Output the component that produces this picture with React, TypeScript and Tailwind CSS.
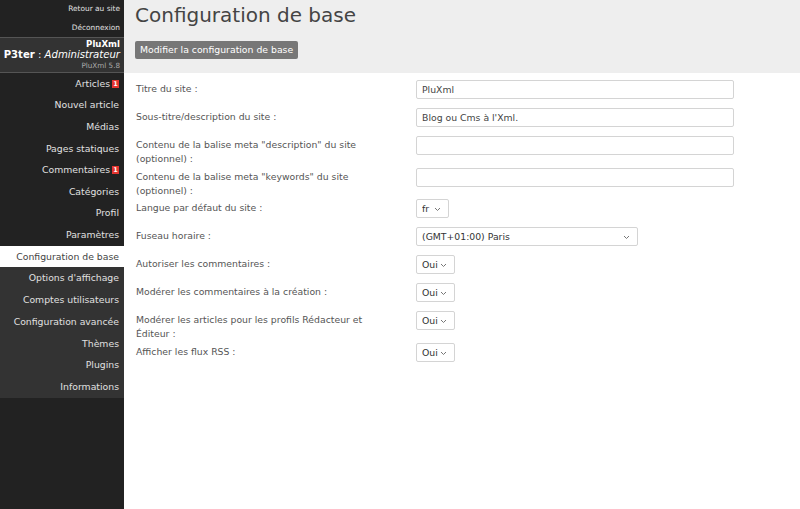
import { ReactNode } from "react";

/* ── sidebar menu ─────────────────────────────── */
const menuTop = [
    { label: "Articles", badge: true },
    { label: "Nouvel article" },
    { label: "Médias" },
    { label: "Pages statiques" },
    { label: "Commentaires", badge: true },
    { label: "Catégories" },
    { label: "Profil" },
    { label: "Paramètres" },
];

const menuBottom = [
    "Options d'affichage",
    "Comptes utilisateurs",
    "Configuration avancée",
    "Thèmes",
    "Plugins",
    "Informations",
];

const Chevron = () => (
    <svg width="7" height="5" viewBox="0 0 7 5" className="pointer-events-none absolute right-[8px] top-[8px]">
        <path d="M1 1l2.5 2.5L6 1" fill="none" stroke="#777" strokeWidth="1" />
    </svg>
);

const Select = ({ value, w }: { value: string; w: string }) => (
    <div className={`relative h-[19px] ${w}`}>
        <select
            defaultValue={value}
            className="block h-full w-full appearance-none rounded-[2px] border border-[#d4d4d4] bg-white pl-[5px] text-[9.3px] text-[#333] outline-none"
        >
            <option>{value}</option>
        </select>
        <Chevron />
    </div>
);

const Input = ({ value = "" }: { value?: string }) => (
    <input
        defaultValue={value}
        className="block h-[19px] w-[318px] rounded-[2px] border border-[#d4d4d4] bg-white px-[5px] text-[9.3px] text-[#444] outline-none"
    />
);

const Row = ({ label, h, children }: { label: ReactNode; h: string; children: ReactNode }) => (
    <div className={`flex items-start ${h}`}>
        <div className="w-[280px] shrink-0 pt-[2px]">
            <div className="w-[240px] text-[9.3px] leading-[14px] text-[#555]">{label}</div>
        </div>
        {children}
    </div>
);

const Badge = () => (
    <span className="ml-[2px] inline-flex h-[8px] w-[7px] items-center justify-center bg-[#e3342f] align-[2px] text-[6.5px] font-bold leading-none text-white">
        1
    </span>
);

export default function App() {
    return (
        <div className="flex h-[509px] w-[800px] overflow-hidden bg-white font-['DejaVu_Sans',sans-serif]">
            {/* sidebar */}
            <aside className="flex w-[124px] shrink-0 flex-col bg-[#222] text-right text-[#e0e0e0]">
                <div className="flex h-[18px] items-center justify-end pr-[4px] text-[7.4px]">Retour au site</div>
                <div className="flex h-[19px] items-center justify-end pr-[4px] text-[7.4px]">Déconnexion</div>
                <div className="h-[36px] border-y border-[#555] bg-[#333] pr-[4px] pt-[1px]">
                    <div className="text-[8.6px] font-bold leading-[10px] text-white">PluXml</div>
                    <div className="text-[10.1px] leading-[12px] text-white">
                        <b>P3ter</b> : <i>Administrateur</i>
                    </div>
                    <div className="text-[7.2px] leading-[9px] text-[#aaa]">PluXml 5.8</div>
                </div>
                {menuTop.map((m) => (
                    <div key={m.label} className="flex h-[21.6px] items-center justify-end pr-[5px] text-[9.3px]">
                        {m.label}
                        {m.badge && <Badge />}
                    </div>
                ))}
                <div className="flex h-[21.6px] items-center justify-end bg-white pr-[5px] text-[9.3px] text-[#444]">
                    Configuration de base
                </div>
                <div className="bg-[#333]">
                    {menuBottom.map((m) => (
                        <div key={m} className="flex h-[21.8px] items-center justify-end pr-[5px] text-[9.3px]">
                            {m}
                        </div>
                    ))}
                </div>
            </aside>

            {/* main */}
            <main className="flex-1">
                <header className="h-[73px] bg-[#eee] pl-[11px] pt-[1px]">
                    <h1 className="text-[20px] leading-[28px] text-[#444]">Configuration de base</h1>
                    <button className="mt-[12px] h-[18px] rounded-[2px] bg-[#777] px-[5px] text-[9.3px] text-white">
                        Modifier la configuration de base
                    </button>
                </header>

                <section className="pl-[12px] pt-[7px]">
                    <Row label="Titre du site :" h="h-[28px]">
                        <Input value="PluXml" />
                    </Row>
                    <Row label="Sous-titre/description du site :" h="h-[28px]">
                        <Input value="Blog ou Cms à l'Xml." />
                    </Row>
                    <Row label={'Contenu de la balise meta "description" du site (optionnel) :'} h="h-[32px]">
                        <Input />
                    </Row>
                    <Row label={'Contenu de la balise meta "keywords" du site (optionnel) :'} h="h-[31px]">
                        <Input />
                    </Row>
                    <Row label="Langue par défaut du site :" h="h-[28px]">
                        <Select value="fr" w="w-[33px]" />
                    </Row>
                    <Row label="Fuseau horaire :" h="h-[28px]">
                        <Select value="(GMT+01:00) Paris" w="w-[222px]" />
                    </Row>
                    <Row label="Autoriser les commentaires :" h="h-[28px]">
                        <Select value="Oui" w="w-[39px]" />
                    </Row>
                    <Row label="Modérer les commentaires à la création :" h="h-[28px]">
                        <Select value="Oui" w="w-[39px]" />
                    </Row>
                    <Row label="Modérer les articles pour les profils Rédacteur et Éditeur :" h="h-[32px]">
                        <Select value="Oui" w="w-[39px]" />
                    </Row>
                    <Row label="Afficher les flux RSS :" h="h-[28px]">
                        <Select value="Oui" w="w-[39px]" />
                    </Row>
                </section>
            </main>
        </div>
    );
}
